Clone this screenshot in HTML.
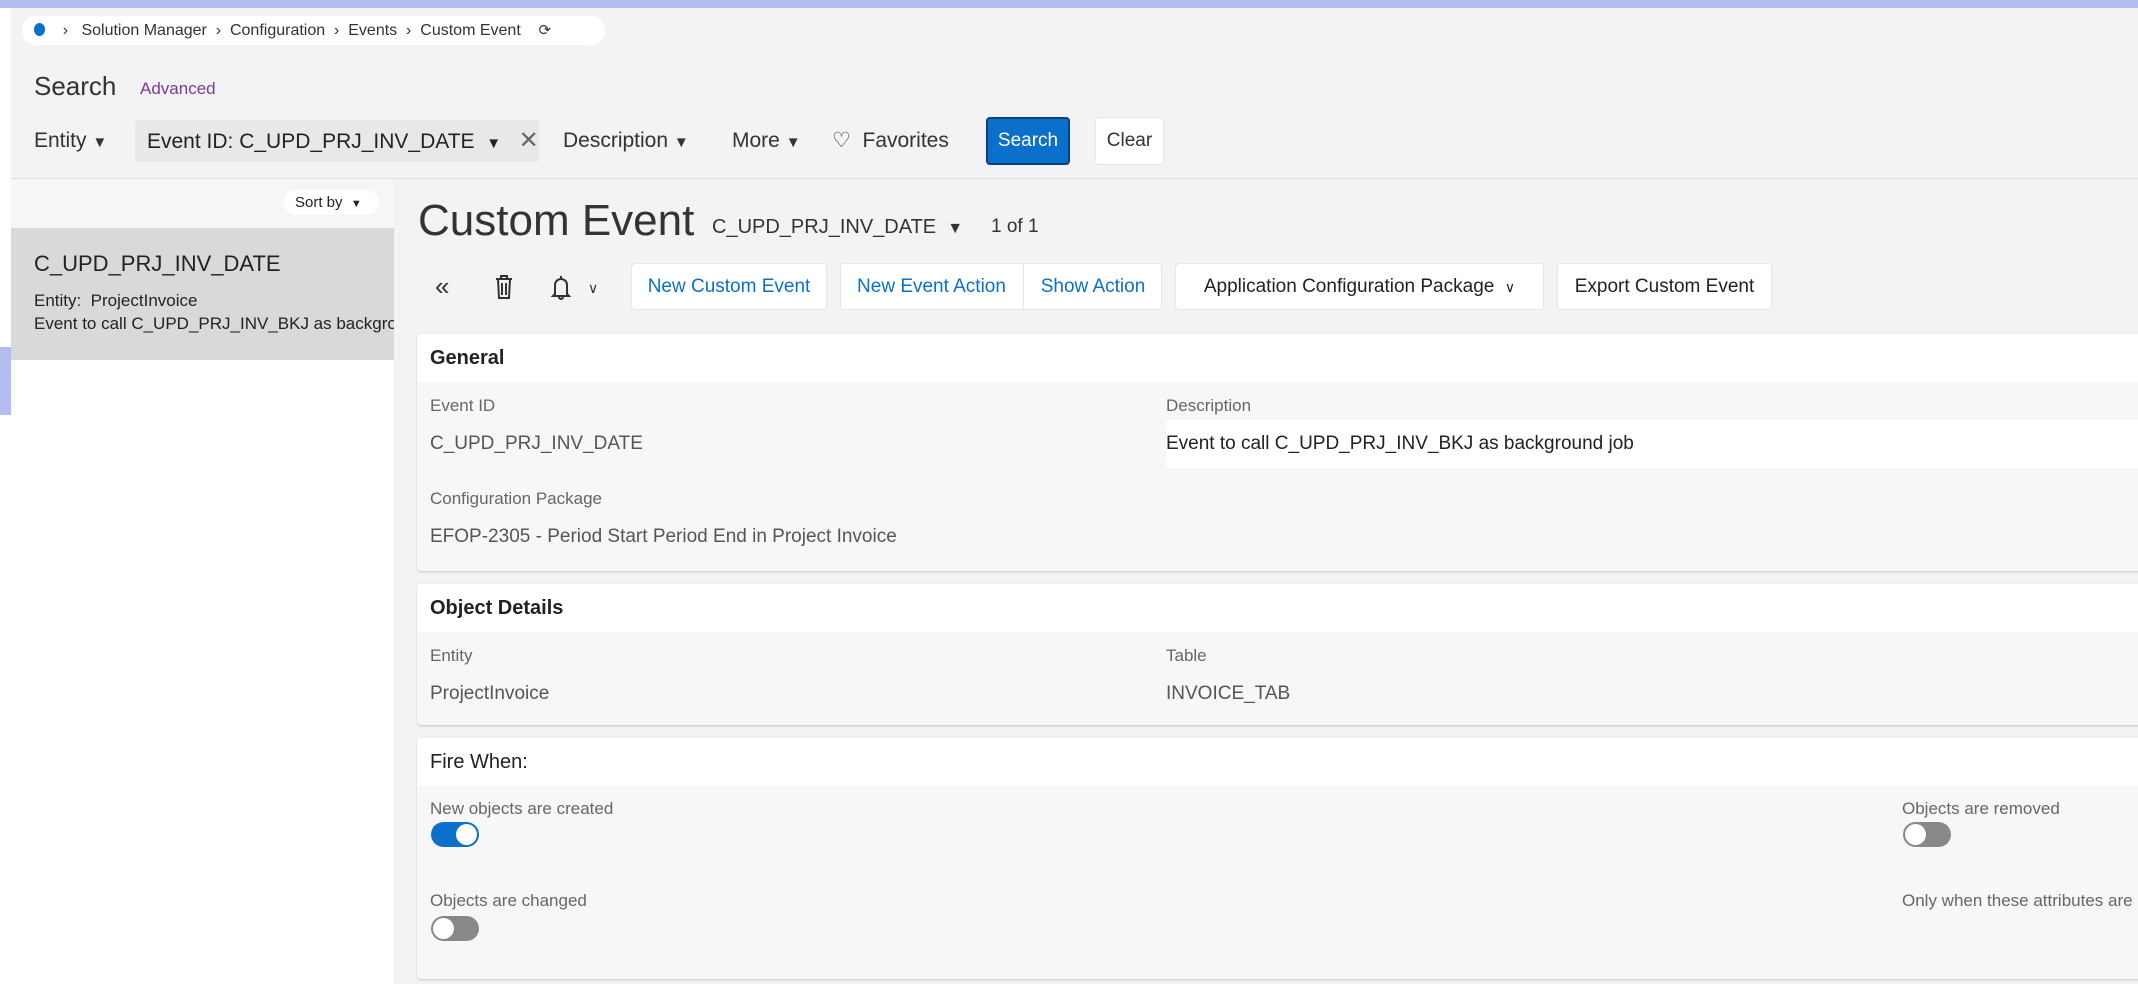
<!DOCTYPE html>
<html><head><meta charset="utf-8"><style>
*{box-sizing:border-box;margin:0;padding:0}
body{width:2138px;height:984px;overflow:hidden;background:#f3f2f5;font-family:"Liberation Sans",sans-serif;color:#222;position:relative}
.a{position:absolute;white-space:nowrap}
.top{left:0;top:0;width:2138px;height:8px;background:#b3bdf2}
.strip{left:0;top:8px;width:11px;height:976px;background:#fff}
.crumb{left:22px;top:16px;width:583px;height:29px;background:#fff;border-radius:14px;font-size:16px;color:#333;line-height:29px;padding-left:12px}
.btn{background:#fff;border:1px solid #e6e6e6;border-radius:4px;font-size:19px;line-height:45px;text-align:center}
.card{background:#f7f7f7;border-radius:4px;box-shadow:0 1px 2px rgba(0,0,0,.18)}
.hd{position:absolute;left:0;right:0;top:0;height:48px;background:#fff;font-size:20px;font-weight:bold;line-height:48px;padding-left:13px;color:#222;border-radius:4px 4px 0 0}
.lb{font-size:17px;color:#666}
.vl{font-size:19px;color:#555}
.tg{width:48px;height:25px;border-radius:13px;background:#888}
.tg i{position:absolute;top:2px;left:2px;width:21px;height:21px;border-radius:50%;background:#fff}
.tg.on{background:#0b6fcc}.tg.on i{left:25px}
</style></head><body>
<div class="a top"></div>
<div class="a strip"></div>
<div class="a" style="left:0;top:347px;width:11px;height:68px;background:#b3bdf2"></div>
<div class="a crumb"><span style="display:inline-block;width:11px;height:13px;border-radius:50%;background:#0b6fcc;vertical-align:-1px"></span>&nbsp;&nbsp;&nbsp; ›&nbsp;&nbsp; Solution Manager &nbsp;›&nbsp; Configuration &nbsp;›&nbsp; Events &nbsp;›&nbsp; Custom Event &nbsp;&nbsp;&nbsp;<span style="font-size:15px">⟳</span></div>
<div class="a" style="left:34px;top:71px;font-size:26px;color:#333">Search</div>
<div class="a" style="left:140px;top:79px;font-size:17px;color:#7a3b8f">Advanced</div>
<div class="a" style="left:34px;top:129px;font-size:21px;color:#333">Entity <span style="font-size:15px">▼</span></div>
<div class="a" style="left:135px;top:120px;width:404px;height:42px;background:#e8e8ea;border-radius:4px;font-size:21px;line-height:42px;padding-left:12px">Event ID: C_UPD_PRJ_INV_DATE &nbsp;<span style="font-size:15px">▼</span>&nbsp;&nbsp; <span style="color:#666;font-size:24px">✕</span></div>
<div class="a" style="left:563px;top:129px;font-size:21px;color:#333">Description <span style="font-size:15px">▼</span></div>
<div class="a" style="left:732px;top:129px;font-size:21px;color:#333">More <span style="font-size:15px">▼</span></div>
<div class="a" style="left:832px;top:128px;font-size:21px;color:#333">♡&nbsp; Favorites</div>
<div class="a" style="left:986px;top:117px;width:84px;height:48px;background:#0b6fcc;border:2px solid #0a3f80;border-radius:4px;color:#fff;font-size:19px;line-height:44px;text-align:center">Search</div>
<div class="a btn" style="left:1095px;top:117px;width:69px;height:48px;color:#333">Clear</div>
<div class="a" style="left:11px;top:178px;width:2127px;height:1px;background:#ddd"></div>
<div class="a" style="left:11px;top:179px;width:383px;height:805px;background:#fff"></div>
<div class="a" style="left:11px;top:179px;width:383px;height:49px;background:#f6f6f8"></div>
<div class="a" style="left:284px;top:190px;width:95px;height:25px;background:#fff;border-radius:12px;font-size:15px;line-height:25px;padding-left:11px">Sort by &nbsp;<span style="font-size:11px">▼</span></div>
<div class="a" style="left:11px;top:228px;width:383px;height:132px;background:#d9d9d9;overflow:hidden">
<div class="a" style="left:23px;top:23px;font-size:22px">C_UPD_PRJ_INV_DATE</div>
<div class="a" style="left:23px;top:63px;font-size:17px">Entity:&nbsp; ProjectInvoice</div>
<div class="a" style="left:23px;top:86px;font-size:17px">Event to call C_UPD_PRJ_INV_BKJ as background job</div></div>
<div class="a" style="left:418px;top:196px;font-size:44px;color:#333">Custom Event</div>
<div class="a" style="left:712px;top:216px;font-size:20px;color:#333">C_UPD_PRJ_INV_DATE &nbsp;<span style="font-size:16px">▼</span></div>
<div class="a" style="left:991px;top:216px;font-size:19px;color:#333">1 of 1</div>
<div class="a" style="left:435px;top:271px;font-size:26px;color:#333">«</div>
<svg class="a" style="left:494px;top:274px" width="20" height="26" viewBox="0 0 20 26" fill="none" stroke="#333" stroke-width="2"><path d="M2 5h16M7 5V2h6v3M4 5l1 19h10l1-19M8 9v12M12 9v12"/></svg>
<svg class="a" style="left:550px;top:274px" width="22" height="26" viewBox="0 0 22 26" fill="none" stroke="#333" stroke-width="2"><path d="M11 2v2M5 20V11a6 6 0 0 1 12 0v9l2 2H3zM9 23a2 2 0 0 0 4 0"/></svg>
<div class="a" style="left:588px;top:280px;font-size:14px;color:#333">∨</div>
<div class="a btn" style="left:631px;top:263px;width:196px;height:47px;color:#0b6fcc">New Custom Event</div>
<div class="a btn" style="left:840px;top:263px;width:322px;height:47px"></div>
<div class="a" style="left:840px;top:263px;width:184px;height:47px;font-size:19px;line-height:47px;text-align:center;color:#0b6fcc;border-right:1px solid #e6e6e6">New Event Action</div>
<div class="a" style="left:1024px;top:263px;width:138px;height:47px;font-size:19px;line-height:47px;text-align:center;color:#0b6fcc">Show Action</div>
<div class="a btn" style="left:1175px;top:263px;width:369px;height:47px;color:#222">Application Configuration Package&nbsp; <span style="font-size:14px">∨</span></div>
<div class="a btn" style="left:1557px;top:263px;width:215px;height:47px;color:#222">Export Custom Event</div>

<div class="a card" style="left:417px;top:334px;width:1730px;height:237px">
<div class="hd">General</div>
<div class="a lb" style="left:13px;top:62px">Event ID</div>
<div class="a vl" style="left:13px;top:99px">C_UPD_PRJ_INV_DATE</div>
<div class="a lb" style="left:749px;top:62px">Description</div>
<div class="a" style="left:749px;top:86px;width:990px;height:48px;background:#fff;font-size:19px;line-height:48px;color:#222">Event to call C_UPD_PRJ_INV_BKJ as background job</div>
<div class="a lb" style="left:13px;top:155px">Configuration Package</div>
<div class="a vl" style="left:13px;top:192px">EFOP-2305 - Period Start Period End in Project Invoice</div>
</div>
<div class="a card" style="left:417px;top:584px;width:1730px;height:141px">
<div class="hd">Object Details</div>
<div class="a lb" style="left:13px;top:62px">Entity</div>
<div class="a vl" style="left:13px;top:99px">ProjectInvoice</div>
<div class="a lb" style="left:749px;top:62px">Table</div>
<div class="a vl" style="left:749px;top:99px">INVOICE_TAB</div>
</div>
<div class="a card" style="left:417px;top:738px;width:1730px;height:241px">
<div class="hd" style="font-weight:normal;color:#222">Fire When:</div>
<div class="a lb" style="left:13px;top:61px">New objects are created</div>
<div class="a tg on" style="left:14px;top:84px"><i></i></div>
<div class="a lb" style="left:1485px;top:61px">Objects are removed</div>
<div class="a tg" style="left:1486px;top:84px"><i></i></div>
<div class="a lb" style="left:13px;top:153px">Objects are changed</div>
<div class="a tg" style="left:14px;top:178px"><i></i></div>
<div class="a lb" style="left:1485px;top:153px">Only when these attributes are changed</div>
</div>
</body></html>
